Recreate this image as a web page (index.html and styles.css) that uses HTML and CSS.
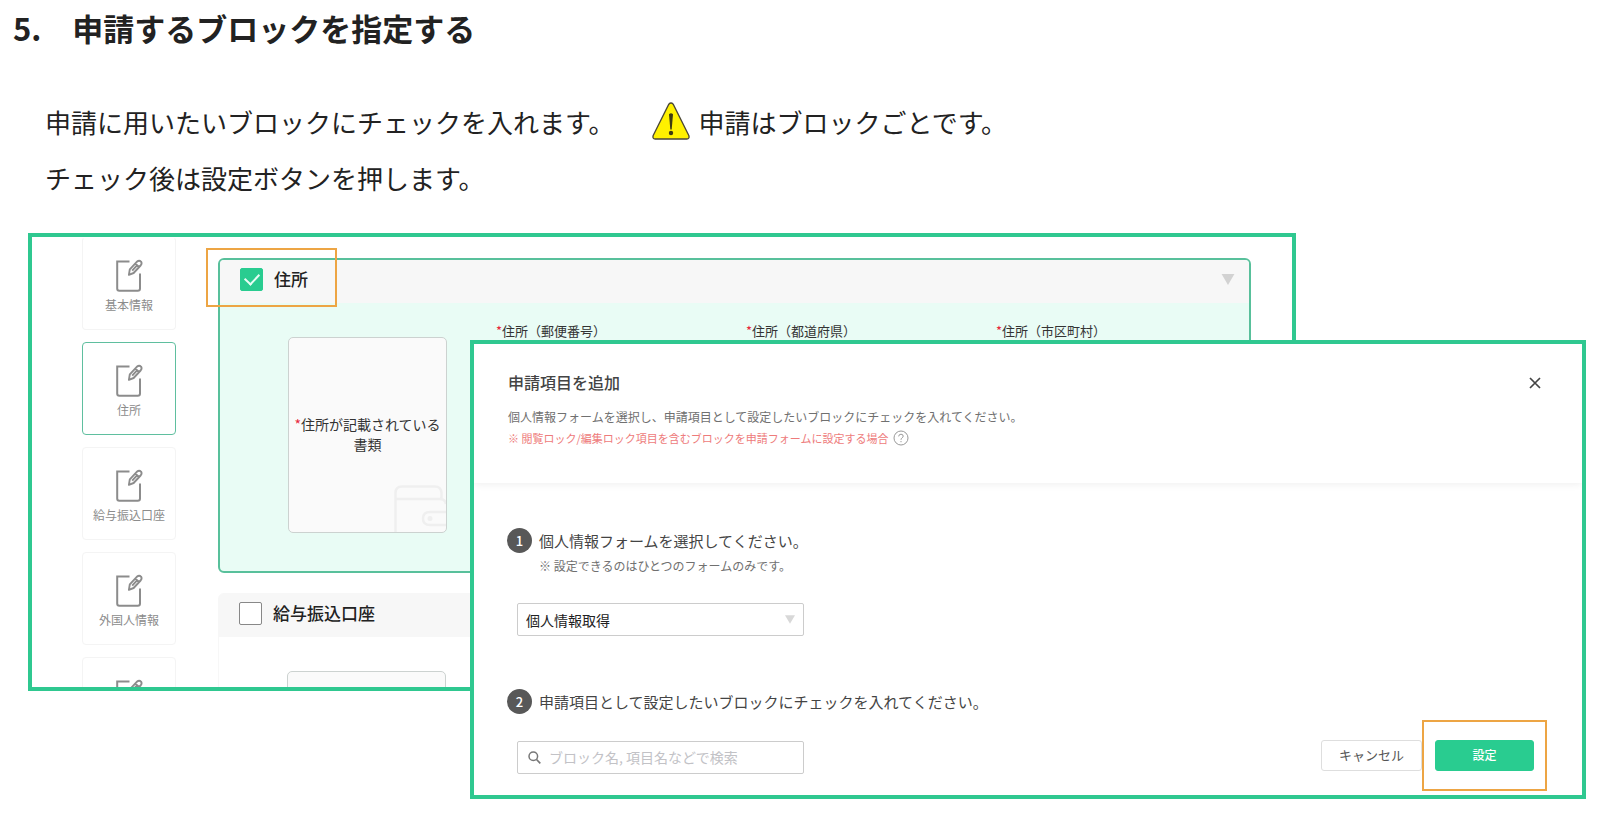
FILE: index.html
```html
<!DOCTYPE html>
<html lang="ja">
<head>
<meta charset="utf-8">
<title>申請するブロックを指定する</title>
<link rel="stylesheet" href="styles.css">
</head>
<body>
<svg class="sprite" aria-hidden="true">
  <symbol id="edit" viewBox="0 0 28 34">
    <path d="M14.500 2.500H2.200V29.500q0 2.200 2.200 2.200H22.800q2.200 0 2.200-2.200V14.500" fill="none" stroke="currentColor" stroke-width="2"/>
    <path d="M13.900 15.800L14.800 10.400L21.800 2.800Q24.200 .9 26 2.600Q27.300 4.400 25.600 6.500L18.600 14Z M20.300 4.600L24.200 8 M17.200 11.600L21.800 6.600" fill="none" stroke="currentColor" stroke-width="1.900" stroke-linejoin="round"/>
  </symbol>
  <symbol id="down" viewBox="0 0 14 12"><path d="M0 0H14L7 12Z" fill="currentColor"/></symbol>
</svg>

<h1 class="title">5.　申請するブロックを指定する</h1>

<div class="lead">
  <p class="lead-line">
    <span>申請に用いたいブロックにチェックを入れます。</span>
    <span class="notice">
      <svg class="warning" viewBox="0 0 38 38" aria-hidden="true">
        <path d="M16.800 2.200Q19 -.2 21.200 2.200L36.800 33.500Q37.800 36.800 34.800 37H3.200Q.2 36.800 1.200 33.500Z" fill="#fff100" stroke="#4a4636" stroke-width="1.300"/>
        <path d="M17 12.200Q19 10.200 21 12.200L19.700 27.500H18.300Z" fill="#3d3a12"/>
        <circle cx="19" cy="31" r="2.200" fill="#3d3a12"/>
      </svg>
      <span>申請はブロックごとです。</span>
    </span>
  </p>
  <p class="lead-line">チェック後は設定ボタンを押します。</p>
</div>

<main class="stage">
  <section class="shot form-shot">
    <nav class="side">
      <a class="side-card" href="#basic"><svg class="edit"><use href="#edit"/></svg>基本情報</a>
      <a class="side-card active" href="#address"><svg class="edit"><use href="#edit"/></svg>住所</a>
      <a class="side-card" href="#bank"><svg class="edit"><use href="#edit"/></svg>給与振込口座</a>
      <a class="side-card" href="#foreign"><svg class="edit"><use href="#edit"/></svg>外国人情報</a>
      <a class="side-card" href="#more" aria-label="その他"><svg class="edit"><use href="#edit"/></svg></a>
    </nav>
    <div class="blocks">
      <article class="block selected" id="address">
        <header class="block-head">
          <input class="check" type="checkbox" id="c-address" checked>
          <label for="c-address">住所</label>
          <svg class="down"><use href="#down"/></svg>
          <span class="mark mark-check"></span>
        </header>
        <div class="block-body">
          <div class="doc">
            <p><span class="req">*</span>住所が記載されている書類</p>
            <svg class="wallet" viewBox="0 0 52 47" aria-hidden="true">
              <path d="M1.500 47V8Q1.500 1.500 8 1.500H41Q47 1.500 47.500 8V13 M1.500 14H46Q51 14 52 19 M52 27H36Q29 27 29 33.500Q29 40 36 40H52" fill="none" stroke="#efefef" stroke-width="2.500"/>
              <circle cx="36" cy="33.500" r="2.500" fill="#efefef"/>
            </svg>
          </div>
          <div class="fields">
            <span><span class="req">*</span>住所（郵便番号）</span>
            <span><span class="req">*</span>住所（都道府県）</span>
            <span><span class="req">*</span>住所（市区町村）</span>
          </div>
        </div>
      </article>
      <article class="block" id="bank">
        <header class="block-head">
          <input class="check" type="checkbox" id="c-bank">
          <label for="c-bank">給与振込口座</label>
        </header>
        <div class="block-body"><div class="doc"></div></div>
      </article>
    </div>
  </section>

  <section class="shot dialog">
    <header class="dialog-head">
      <div>
        <h2 class="dialog-title">申請項目を追加</h2>
        <p class="dialog-text">個人情報フォームを選択し、申請項目として設定したいブロックにチェックを入れてください。</p>
        <p class="dialog-warn">※ 閲覧ロック/編集ロック項目を含むブロックを申請フォームに設定する場合
          <svg class="help" viewBox="0 0 16 16" aria-hidden="true">
            <circle cx="8" cy="8" r="7" fill="none" stroke="#999" stroke-width="1"/>
            <path d="M5.700 6.400Q5.800 4.200 8 4.200Q10.300 4.300 10.200 6.200Q10.100 7.200 9 7.900Q8 8.600 8 9.800M8 11V12.200" fill="none" stroke="#999" stroke-width="1"/>
          </svg>
        </p>
      </div>
      <button class="close" type="button" aria-label="閉じる">
        <svg viewBox="0 0 12 12"><path d="M1 1L11 11M11 1L1 11" stroke="#444" stroke-width="1.700"/></svg>
      </button>
    </header>
    <div class="dialog-body">
      <div class="step"><span class="num">1</span><label for="form">個人情報フォームを選択してください。</label></div>
      <p class="step-note">※ 設定できるのはひとつのフォームのみです。</p>
      <div class="box select-box">
        <select id="form"><option>個人情報取得</option></select>
        <svg class="caret"><use href="#down"/></svg>
      </div>
      <div class="step"><span class="num">2</span><label for="search">申請項目として設定したいブロックにチェックを入れてください。</label></div>
      <div class="foot">
        <div class="box search-box">
          <svg class="lens" viewBox="0 0 13 13" aria-hidden="true"><circle cx="5.300" cy="5.300" r="4.300" fill="none" stroke="#777" stroke-width="1.500"/><path d="M8.500 8.500L12.300 12.300" stroke="#777" stroke-width="1.700"/></svg>
          <input id="search" type="text" placeholder="ブロック名, 項目名などで検索">
        </div>
        <div class="actions">
          <button class="btn" type="button">キャンセル</button>
          <span class="mark mark-button"><button class="btn primary" type="button">設定</button></span>
        </div>
      </div>
    </div>
  </section>
</main>
</body>
</html>
```

FILE: styles.css
```css
* { box-sizing: border-box; }
body {
  margin: 0;
  background: #fff;
  color: #222;
  font-family: "Noto Sans CJK JP", sans-serif;
}
h1, h2, p { margin: 0; font-weight: 400; }
button, input, select { font: inherit; color: inherit; margin: 0; }
svg { display: block; flex: none; }
.sprite { width: 0; height: 0; position: absolute; }

.title {
  padding: 7px 13px 0;
  font-size: 31px;
  line-height: 42px;
  font-weight: 700;
}
.lead { padding: 45px 45px 27px; font-size: 26px; line-height: 56px; }
.lead-line { display: flex; flex-wrap: wrap; column-gap: 38px; }
.notice { display: flex; align-items: center; gap: 8px; }
.warning { width: 38px; height: 38px; margin-bottom: 3px; }

.stage { display: grid; padding-right: 14px; }
.shot { grid-area: 1 / 1; border: 4px solid #2fc890; background: #fff; overflow: hidden; }
.form-shot {
  display: flex;
  gap: 42px;
  height: 458px;
  margin-left: 28px;
  margin-right: 290px;
  padding: 0 41px 0 50px;
}

.side { display: flex; flex-direction: column; gap: 12px; flex: none; width: 94px; }
.side-card {
  display: flex;
  flex-direction: column;
  align-items: center;
  flex: none;
  height: 93px;
  padding-top: 21px;
  border: 1px solid #f4f4f4;
  border-radius: 4px;
  color: #8c8c8c;
  font-size: 12px;
  line-height: 18px;
  text-decoration: none;
  gap: 3px;
}
.side-card:first-child { border-top-color: #fff; }
.side-card.active { border-color: #5fbf9f; }
.edit { width: 28px; height: 34px; }

.blocks { flex: 1; min-width: 0; display: flex; flex-direction: column; gap: 20px; padding-top: 21px; }
.block { border: 1px solid #f7f7f7; border-radius: 6px; flex: none; }
.block.selected { border: 2px solid #58c09b; background: #e9fcf5; }
.block-head {
  position: relative;
  display: flex;
  align-items: center;
  gap: 11px;
  height: 43px;
  padding: 0 14px 5px 20px;
  background: #f7f7f7;
  font-size: 17px;
  line-height: 25px;
  font-weight: 500;
  border-radius: 4px 4px 0 0;
}
.block-head label { padding-bottom: 2px; }
.check {
  appearance: none;
  display: grid;
  place-items: center;
  width: 23px;
  height: 23px;
  border: 1px solid #888;
  border-radius: 2px;
  background: #fff;
}
.check:checked { border-color: #29cc90; background: #29cc90; }
.check:checked::after {
  content: "";
  width: 12px;
  height: 7px;
  margin-bottom: 4px;
  border: solid #e9fcf5;
  border-width: 0 0 2px 2px;
  transform: rotate(-47deg);
}
.down { width: 14px; height: 11px; margin-left: auto; color: #d2d2d2; }
.mark { border: 2px solid #eda544; }
.mark-check { position: absolute; left: -14px; top: -12px; width: 131px; height: 59px; }
.block-body { display: flex; gap: 49px; padding: 34px 0 38px 68px; }
.doc {
  position: relative;
  display: grid;
  place-items: center;
  flex: none;
  width: 159px;
  height: 196px;
  padding: 0 5px 3px;
  border: 1px solid #ccd2d0;
  border-radius: 5px;
  background: #fafafa;
  color: #333;
  font-size: 14px;
  line-height: 20px;
  text-align: center;
  overflow: hidden;
}
.wallet { position: absolute; right: 0; bottom: 0; width: 52px; height: 47px; }
.req { color: #e8283c; }
.fields {
  display: grid;
  grid-template-columns: repeat(3, 250px);
  height: 18px;
  margin-top: -15px;
  color: #333;
  font-size: 13px;
  line-height: 18px;
  white-space: nowrap;
}

.dialog { position: relative; z-index: 1; margin-top: 107px; margin-left: 470px; color: #444; }
.dialog-head {
  display: flex;
  justify-content: space-between;
  align-items: flex-start;
  padding: 26px 34px 34px;
  box-shadow: 0 1px 8px rgba(0, 0, 0, .07);
}
.dialog-title { font-size: 16px; line-height: 24px; font-weight: 500; margin-bottom: 13px; }
.dialog-text { font-size: 12px; line-height: 20px; color: #707070; }
.dialog-warn { display: flex; align-items: center; gap: 5px; font-size: 11px; line-height: 22px; color: #ee7b7b; }
.help { width: 16px; height: 16px; }
.close { width: 26px; height: 26px; padding: 7px; border: 0; background: none; }
.close svg { width: 12px; height: 12px; }
.dialog-body { padding: 45px 35px 4px 33px; }
.step { display: flex; align-items: center; gap: 7px; font-size: 15px; line-height: 25px; }
.num {
  width: 25px;
  height: 25px;
  border-radius: 50%;
  background: #585858;
  color: #fff;
  font-size: 13px;
  font-weight: 500;
  text-align: center;
}
.step-note { margin: 4px 0 28px 32px; font-size: 12px; line-height: 18px; color: #707070; }
.box {
  position: relative;
  display: flex;
  align-items: center;
  width: 287px;
  height: 33px;
  border: 1px solid #ccc;
  border-radius: 2px;
  font-size: 14px;
}
.select-box { margin: 0 0 53px 10px; color: #222; }
.box select {
  appearance: none;
  width: 100%;
  height: 100%;
  padding: 0 8px;
  border: 0;
  background: none;
}
.caret { position: absolute; right: 8px; width: 10px; height: 9px; color: #d8d8d8; pointer-events: none; }
.foot { display: flex; justify-content: space-between; padding: 6px 0 0 10px; }
.search-box { margin-top: 21px; gap: 8px; padding-left: 10px; }
.lens { width: 13px; height: 13px; }
.box input { flex: 1; min-width: 0; height: 100%; padding: 0 0 2px; border: 0; background: none; }
.box input::placeholder { color: #c2c2c6; }
.actions { display: flex; align-items: center; }
.btn {
  width: 101px;
  height: 31px;
  padding: 0 0 2px;
  border: 1px solid #dedede;
  border-radius: 3px;
  background: #fff;
  color: #555;
  font-size: 13px;
}
.mark-button { display: block; padding: 18px 11px; line-height: 0; }
.btn.primary { width: 99px; border-color: #29cc90; background: #29cc90; color: #fff; font-size: 12px; font-weight: 500; }
```
